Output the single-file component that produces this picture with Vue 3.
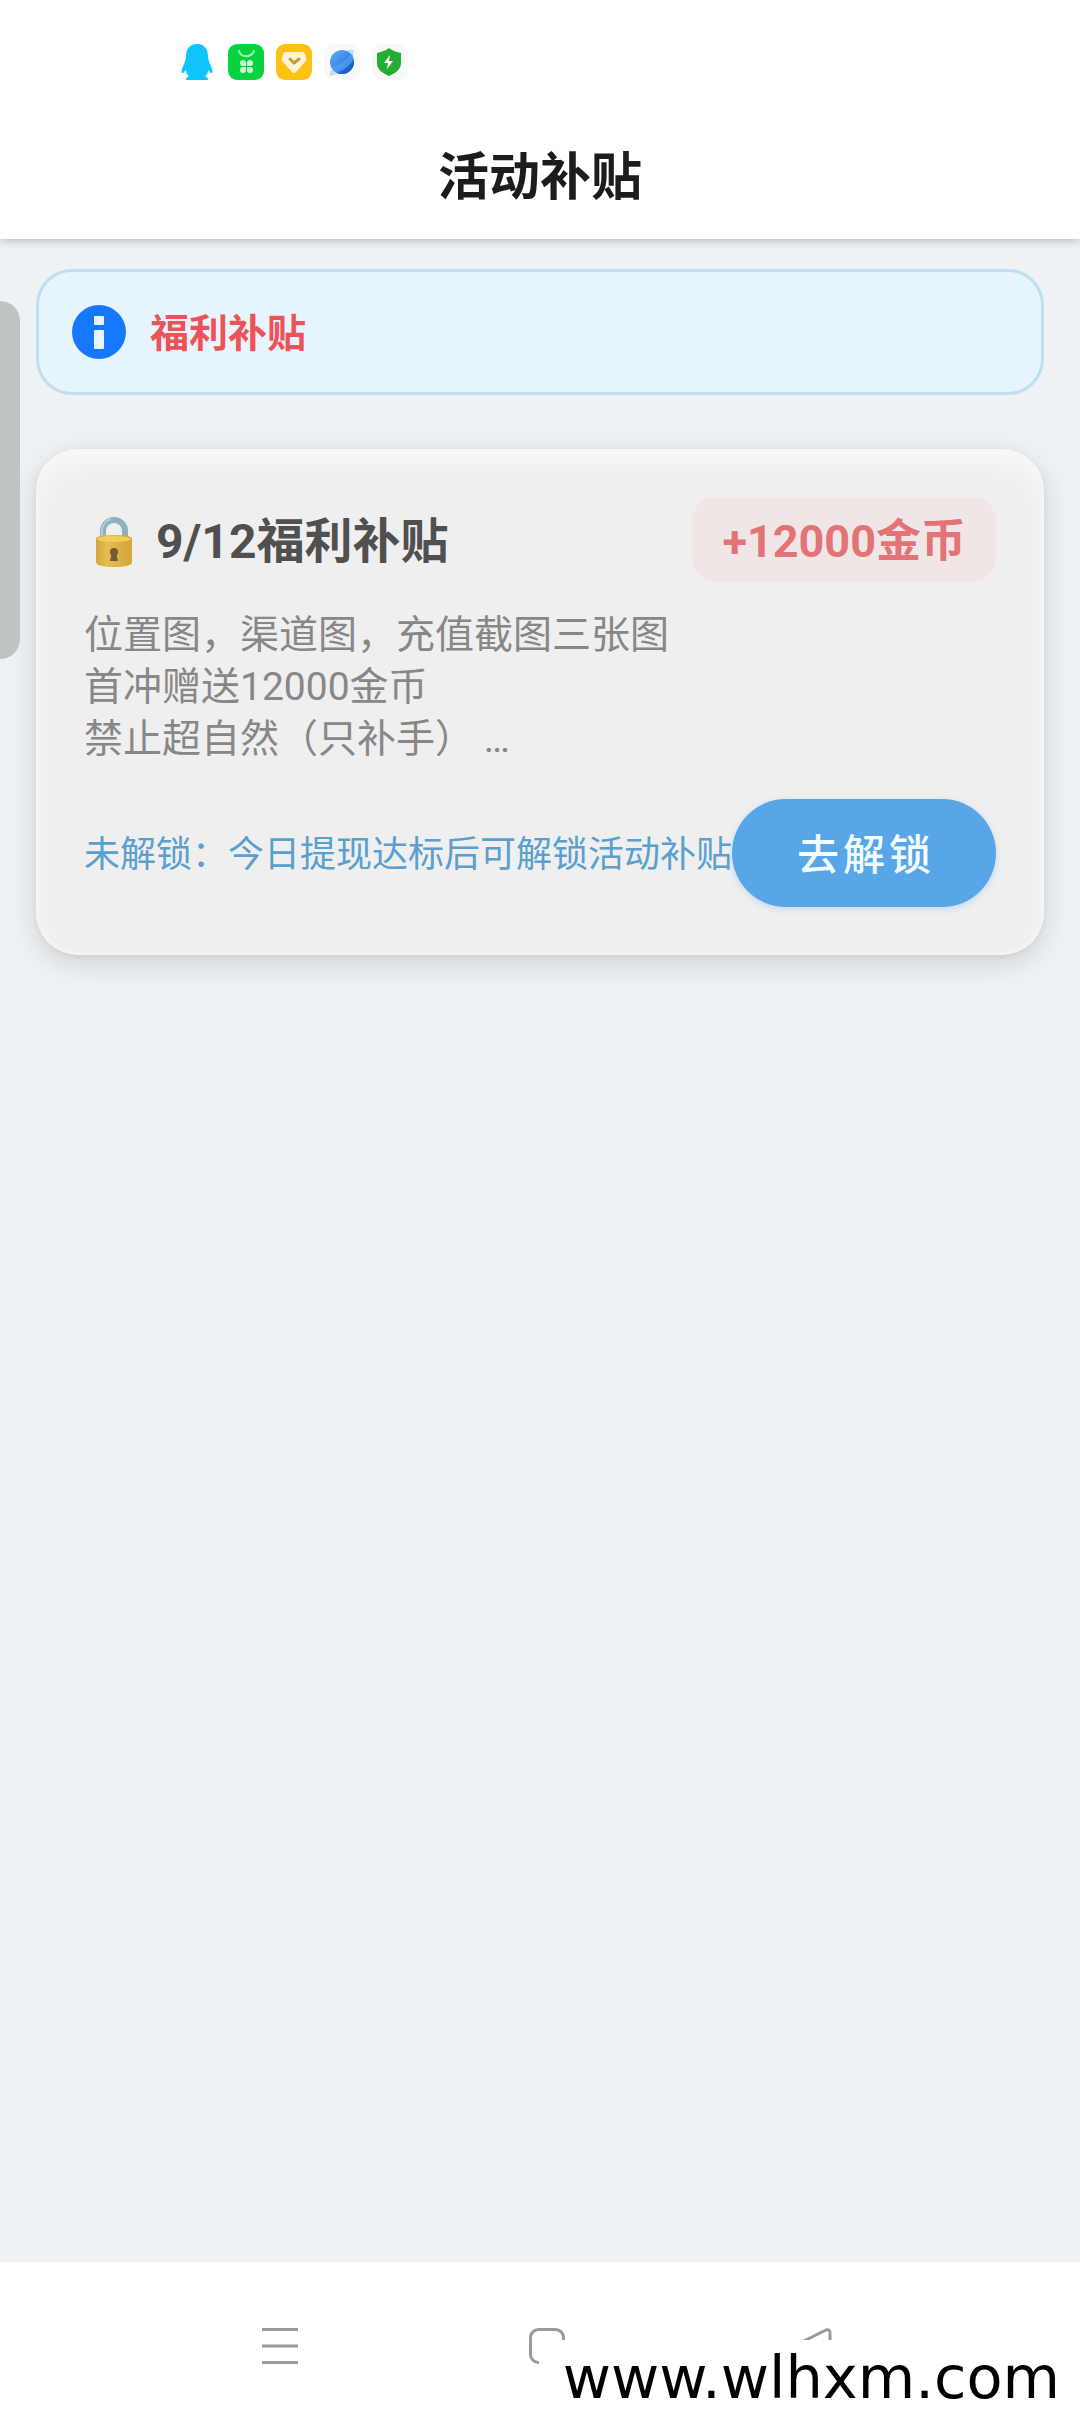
<script setup>
import { ref } from 'vue'

const notice = ref('福利补贴')
const activity = ref({
  title: '9/12福利补贴',
  reward: '+12000金币',
  lines: ['位置图，渠道图，充值截图三张图', '首冲赠送12000金币', '禁止超自然（只补手） …'],
  hint: '未解锁：今日提现达标后可解锁活动补贴',
  action: '去解锁'
})
</script>

<template>
  <div class="page">
    <header class="header">
      <div class="status">
        <svg width="36" height="40" viewBox="0 0 36 40" aria-hidden="true">
          <path d="M17 2C9 2 6 8 6 14c0 3-1 5-2 8-2 4-3 7-2 9 1 1 2-1 4-3 0 3 1 5 3 6-2 1-3 2-3 4h22c0-2-1-3-3-4 2-1 3-3 3-6 2 2 3 4 4 3 1-2 0-5-2-9-1-3-2-5-2-8 0-6-3-12-11-12z" fill="#12c4fd" />
        </svg>
        <svg width="36" height="36" viewBox="0 0 36 36" aria-hidden="true">
          <rect width="36" height="36" rx="9" fill="#09d241" />
          <path d="M11 7c2 7 12 7 15 0" fill="none" stroke="#9df5ae" stroke-width="2" stroke-linecap="round" />
          <g fill="#c9fbd2">
            <path d="M18 22h-3a3 3 0 1 1 3-3zM19 22h3a3 3 0 1 0-3-3zM18 23h-3a3 3 0 1 0 3 3zM19 23h3a3 3 0 1 1-3 3z" />
          </g>
        </svg>
        <svg width="36" height="36" viewBox="0 0 36 36" aria-hidden="true">
          <rect width="36" height="36" rx="9" fill="#fdc014" />
          <path d="M10 8h16q2 0 3 2l1 4q1 2-1 4L20 28q-2 2-4 0L7 18q-2-2-1-4l1-4q1-2 3-2z" fill="#fff3d2" />
          <path d="M14 15l4 4 5-4" fill="none" stroke="#c69a3c" stroke-width="3" stroke-linecap="round" stroke-linejoin="round" />
        </svg>
        <svg class="soft" width="36" height="36" viewBox="0 0 36 36" aria-hidden="true">
          <defs>
            <linearGradient id="planet" x1="0" y1="0" x2="1" y2="1">
              <stop offset="0" stop-color="#5fb0fa" /><stop offset=".55" stop-color="#3b84ea" /><stop offset="1" stop-color="#1553bd" />
            </linearGradient>
          </defs>
          <path d="M22 7c5-2 8-2 8 1 0 6-12 19-20 23-4 2-5 1-4-3z" fill="#bfe0fc" />
          <circle cx="18" cy="18" r="12" fill="url(#planet)" />
          <path d="M7 23C15 22 24 14 28 10l2 5c-4 6-10 12-19 13z" fill="#5ea4f2" opacity=".6" />
          <path d="M30 16c1 8-5 14-12 14h-5c7-3 13-9 17-14z" fill="#1d60cf" />
        </svg>
        <svg class="soft" width="36" height="36" viewBox="0 0 36 36" aria-hidden="true">
          <path d="M17 4c4 3 8 4 12 5v10c0 6-5 10-12 13C10 29 5 25 5 19V9c4-1 8-2 12-5z" fill="#23ad33" />
          <path d="M18 11l-6 8h4l-1 6 6-8h-4z" fill="#fff" />
        </svg>
      </div>
      <h1 class="title">活动补贴</h1>
    </header>

    <main class="content">
      <section class="notice">
        <svg width="54" height="54" viewBox="0 0 54 54" aria-hidden="true">
          <circle cx="27" cy="27" r="27" fill="#1677ff" />
          <rect x="22" y="11" width="10" height="9" rx="1" fill="#e8f5ff" />
          <rect x="22" y="25" width="10" height="19" rx="1" fill="#e8f5ff" />
        </svg>
        <span class="notice-text">{{ notice }}</span>
      </section>

      <article class="card">
        <div class="card-head">
          <h2 class="card-title">
            <svg width="60" height="54" viewBox="0 0 60 54" aria-hidden="true">
              <defs>
                <linearGradient id="brass" x1="0" y1="0" x2="1" y2="0">
                  <stop offset="0" stop-color="#d4a53d" /><stop offset=".3" stop-color="#e6bd50" /><stop offset="1" stop-color="#d3a53c" />
                </linearGradient>
              </defs>
              <path d="M19 27V16a11 11 0 0 1 22 0v11" fill="none" stroke="#8fb1bf" stroke-width="6" />
              <path d="M18 24V15a12 12 0 0 1 9-11" fill="none" stroke="#b4ced8" stroke-width="2" />
              <path d="M12 24q0-4 18-4t18 4v23q0 5-18 5t-18-5z" fill="url(#brass)" />
              <ellipse cx="30" cy="24" rx="17" ry="3" fill="#ecd05a" />
              <circle cx="30" cy="37" r="4" fill="#735b35" />
              <path d="M28 38h4l2 8h-8z" fill="#735b35" />
            </svg>
            <span>{{ activity.title }}</span>
          </h2>
          <span class="badge">{{ activity.reward }}</span>
        </div>
        <div class="desc">
          <p v-for="line in activity.lines" :key="line">{{ line }}</p>
        </div>
        <div class="card-foot">
          <span class="hint">{{ activity.hint }}</span>
          <button class="unlock" type="button">{{ activity.action }}</button>
        </div>
      </article>
    </main>

    <nav class="nav">
      <button type="button" aria-label="最近任务">
        <svg width="36" height="36" viewBox="0 0 36 36"><path d="M0 1.5h36M0 18h36M0 34.5h36" /></svg>
      </button>
      <button type="button" aria-label="主屏幕">
        <svg width="36" height="36" viewBox="0 0 36 36"><rect x="1.5" y="1.5" width="33" height="33" rx="8" /></svg>
      </button>
      <button type="button" aria-label="返回">
        <svg width="36" height="36" viewBox="0 0 36 36"><path d="M30 2L4 15q-4 3 0 6l26 13q4 1 4-3V5q0-4-4-3z" /></svg>
      </button>
    </nav>

    <div class="side-handle"></div>
    <div class="watermark">www.wlhxm.com</div>
  </div>
</template>

<style>
body {
  margin: 0;
  background: #eef2f5;
}
</style>

<style scoped>
.page {
  position: relative;
  display: flex;
  flex-direction: column;
  min-height: 100vh;
  background: #eef2f5;
  font-family: Roboto, "Noto Sans CJK SC", sans-serif;
  overflow: hidden;
}
h1, h2, p {
  margin: 0;
}
svg {
  display: block;
  flex: none;
}
button {
  border: 0;
  padding: 0;
  background: none;
  font-family: inherit;
}
.header {
  background: #fff;
  box-shadow: 0 2px 8px rgba(0, 0, 0, 0.22);
}
.status {
  display: flex;
  align-items: center;
  gap: 12px;
  height: 100px;
  padding: 12px 180px 0;
}
.soft {
  border-radius: 9px;
  background: #f8f8f9;
}
.title {
  padding: 28px 0 24px;
  font-size: 51px;
  line-height: 75px;
  font-weight: 700;
  text-align: center;
  color: #1c1c1c;
}
.content {
  flex: 1;
  display: flex;
  flex-direction: column;
  gap: 54px;
  padding: 30px 36px;
}
.notice {
  display: flex;
  align-items: center;
  gap: 24px;
  padding: 33px;
  border: 3px solid #c0def1;
  border-radius: 36px;
  background: #e6f4fe;
  font-size: 39px;
  line-height: 50px;
  font-weight: 700;
  color: #ee5259;
}
.notice-text {
  padding-top: 4px;
}
.card {
  padding: 48px;
  border-radius: 42px;
  background: #efefef;
  box-shadow: 0 8px 30px rgba(0, 0, 0, 0.13), 0 2px 6px rgba(0, 0, 0, 0.06),
    inset 0 12px 24px rgba(255, 255, 255, 0.6), inset 0 -2px 4px rgba(255, 255, 255, 0.4);
}
.card-head,
.card-title,
.card-foot {
  display: flex;
  align-items: center;
}
.card-head,
.card-foot {
  justify-content: space-between;
}
.card-title {
  gap: 12px;
  padding-top: 4px;
  font-size: 48px;
  line-height: 72px;
  font-weight: 700;
  color: #505050;
}
.badge {
  padding: 10px 30px 6px;
  border-radius: 24px;
  background: #f1e6e6;
  font-size: 45px;
  line-height: 69px;
  font-weight: 700;
  color: #e27377;
}
.desc {
  padding: 27px 0 34px;
  font-size: 39px;
  line-height: 52px;
  color: #878787;
}
.hint {
  padding-top: 4px;
  font-size: 36px;
  line-height: 54px;
  color: #5a9fce;
  white-space: nowrap;
}
.unlock {
  flex: none;
  width: 264px;
  height: 108px;
  padding: 0 0 4px 4px;
  border-radius: 54px;
  background: #58a6e8;
  box-shadow: 0 2px 6px rgba(88, 166, 232, 0.3);
  font-size: 42px;
  font-weight: 500;
  letter-spacing: 4px;
  color: #f2fcff;
}
.nav {
  display: grid;
  grid-template-columns: repeat(3, 1fr);
  justify-items: center;
  padding: 66px 133px 48px 147px;
  background: #fff;
}
.nav svg {
  fill: none;
  stroke: #9a9a9a;
  stroke-width: 3;
}
.side-handle {
  position: absolute;
  top: 301px;
  left: 0;
  width: 20px;
  height: 358px;
  border-radius: 0 20px 20px 0;
  background: #bfc3c4;
}
.watermark {
  position: absolute;
  right: 0;
  bottom: 0;
  padding: 4px 20px 0 24px;
  background: #fff;
  font-family: "DejaVu Sans", sans-serif;
  font-size: 59px;
  line-height: 68px;
  color: #000;
}
</style>
